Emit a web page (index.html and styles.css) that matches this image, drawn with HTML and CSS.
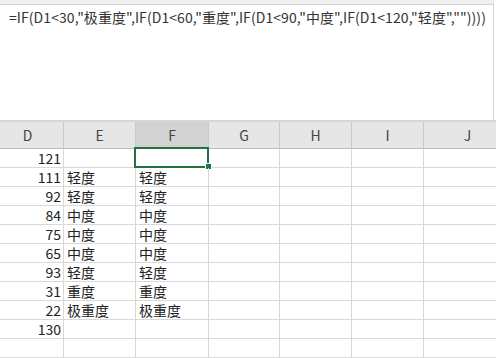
FILE: index.html
```html
<!DOCTYPE html>
<html>
<head>
<meta charset="utf-8">
<link rel="stylesheet" href="styles.css">
</head>
<body>
<div class="page">
  <div class="formula-bar">
    <div class="formula">=IF(D1&lt;30,"极重度",IF(D1&lt;60,"重度",IF(D1&lt;90,"中度",IF(D1&lt;120,"轻度",""))))</div>
  </div>
  <div class="sheet">
    <div class="row head">
      <div class="c">D</div><div class="c">E</div><div class="c sel">F</div><div class="c">G</div><div class="c">H</div><div class="c">I</div><div class="c">J</div>
    </div>
    <div class="row"><div class="c n">121</div><div class="c"></div><div class="c active"><span class="box"></span><span class="handle"></span></div><div class="c"></div><div class="c"></div><div class="c"></div><div class="c"></div></div>
    <div class="row"><div class="c n">111</div><div class="c">轻度</div><div class="c">轻度</div><div class="c"></div><div class="c"></div><div class="c"></div><div class="c"></div></div>
    <div class="row"><div class="c n">92</div><div class="c">轻度</div><div class="c">轻度</div><div class="c"></div><div class="c"></div><div class="c"></div><div class="c"></div></div>
    <div class="row"><div class="c n">84</div><div class="c">中度</div><div class="c">中度</div><div class="c"></div><div class="c"></div><div class="c"></div><div class="c"></div></div>
    <div class="row"><div class="c n">75</div><div class="c">中度</div><div class="c">中度</div><div class="c"></div><div class="c"></div><div class="c"></div><div class="c"></div></div>
    <div class="row"><div class="c n">65</div><div class="c">中度</div><div class="c">中度</div><div class="c"></div><div class="c"></div><div class="c"></div><div class="c"></div></div>
    <div class="row"><div class="c n">93</div><div class="c">轻度</div><div class="c">轻度</div><div class="c"></div><div class="c"></div><div class="c"></div><div class="c"></div></div>
    <div class="row"><div class="c n">31</div><div class="c">重度</div><div class="c">重度</div><div class="c"></div><div class="c"></div><div class="c"></div><div class="c"></div></div>
    <div class="row"><div class="c n">22</div><div class="c">极重度</div><div class="c">极重度</div><div class="c"></div><div class="c"></div><div class="c"></div><div class="c"></div></div>
    <div class="row"><div class="c n">130</div><div class="c"></div><div class="c"></div><div class="c"></div><div class="c"></div><div class="c"></div><div class="c"></div></div>
    <div class="row"><div class="c n"></div><div class="c"></div><div class="c"></div><div class="c"></div><div class="c"></div><div class="c"></div><div class="c"></div></div>
  </div>
</div>
</body>
</html>
```
FILE: styles.css
```css
html, body {
  margin: 0;
  padding: 0;
  background: #ffffff;
}
.page {
  width: 496px;
  height: 358px;
  overflow: hidden;
  font-family: "Noto Sans CJK SC", "Noto Sans", sans-serif;
  color: #222;
}
.formula-bar {
  height: 115px;
  border-top: 4px solid #f0f0f0;
  box-shadow: inset 0 1px 0 #d4d4d4;
  border-right: 1px solid #d4d4d4;
  width: 493px;
  padding-top: 1px;
}
.formula {
  padding-left: 9px;
  font-size: 14px;
  line-height: 25px;
  color: #333;
  white-space: nowrap;
  letter-spacing: 0.07px;
}
.sheet {
  margin-left: -8px;
  width: 520px;
}
.row {
  display: grid;
  grid-template-columns: 72px 72px 73px 71px 72px 72px 88px;
  height: 18px;
  border-bottom: 1px solid #d8d8d8;
}
.row.head {
  height: 26px;
  border-top: 2px solid #d6d6d6;
  border-bottom: 1px solid #bdbdbd;
  background: #e6e6e6;
}
.c {
  border-right: 1px solid #d8d8d8;
  font-size: 14px;
  line-height: 18px;
  padding-left: 3px;
  white-space: nowrap;
  position: relative;
}
.head .c {
  border-right: 1px solid #c9c9c9;
  text-align: center;
  padding-left: 0;
  line-height: 27px;
  color: #444;
  font-size: 14px;
}
.head .c.sel {
  background: #d2d2d2;
}
.c.n {
  text-align: right;
  padding-left: 0;
  padding-right: 2px;
}
.box {
  position: absolute;
  left: -2px;
  top: -2px;
  width: 71px;
  height: 17px;
  border: 2px solid #217346;
}
.handle {
  position: absolute;
  right: -4px;
  bottom: -3px;
  width: 5px;
  height: 5px;
  background: #217346;
  border: 1px solid #ffffff;
}
```
